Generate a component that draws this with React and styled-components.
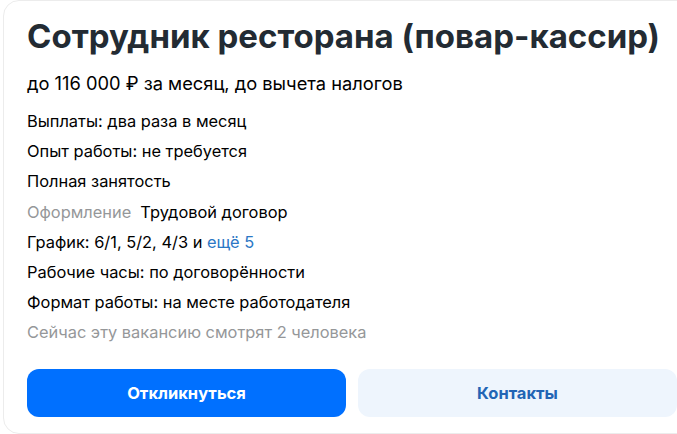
import React from "react";
import styled, { createGlobalStyle } from "styled-components";

const GlobalStyle = createGlobalStyle`
  html, body {
    overflow: hidden;
  }
  body {
    margin: 0;
    background: #fff;
    font-family: Inter, "Noto Sans", sans-serif;
    color: #000;
  }
`;

const Card = styled.section`
  margin-left: 3px;
  width: 650px;
  padding: 13px 23px 16px;
  border: 1px solid #ececec;
  border-radius: 16px;
  background: #fff;
`;

const Title = styled.h1`
  margin: 0;
  font-size: 33px;
  line-height: 44px;
  font-weight: 700;
  color: #232b33;
  white-space: nowrap;
`;

const Salary = styled.p`
  margin: 11px 0 9px;
  font-size: 18.3px;
  line-height: 28px;
`;

const Details = styled.ul`
  list-style: none;
  margin: 0;
  padding: 0;
`;

const Row = styled.li`
  font-size: 16.4px;
  line-height: 30.2px;
  white-space: nowrap;
  color: ${(p) => (p.$muted ? "#959799" : "#000")};
`;

const Label = styled.span`
  color: #959799;
  margin-right: 9px;
`;

const More = styled.a`
  color: #2b77c5;
  text-decoration: none;
`;

const Actions = styled.div`
  display: grid;
  grid-template-columns: 1fr 1fr;
  gap: 12px;
  margin-top: 21px;
`;

const Button = styled.button`
  height: 48px;
  border: none;
  border-radius: 12px;
  font-family: inherit;
  font-size: 16.5px;
  font-weight: 700;
  background: ${(p) => (p.$primary ? "#0070ff" : "#eef5fd")};
  color: ${(p) => (p.$primary ? "#fff" : "#2265b5")};
  cursor: pointer;
`;

export default function App() {
  return (
    <>
      <GlobalStyle />
      <Card>
        <Title>Сотрудник ресторана (повар-кассир)</Title>
        <Salary>до 116 000 ₽ за месяц, до вычета налогов</Salary>
        <Details>
          <Row>Выплаты: два раза в месяц</Row>
          <Row>Опыт работы: не требуется</Row>
          <Row>Полная занятость</Row>
          <Row>
            <Label>Оформление</Label>Трудовой договор
          </Row>
          <Row>
            График: 6/1, 5/2, 4/3 и <More href="#">ещё 5</More>
          </Row>
          <Row>Рабочие часы: по договорённости</Row>
          <Row>Формат работы: на месте работодателя</Row>
          <Row $muted>Сейчас эту вакансию смотрят 2 человека</Row>
        </Details>
        <Actions>
          <Button $primary>Откликнуться</Button>
          <Button>Контакты</Button>
        </Actions>
      </Card>
    </>
  );
}
